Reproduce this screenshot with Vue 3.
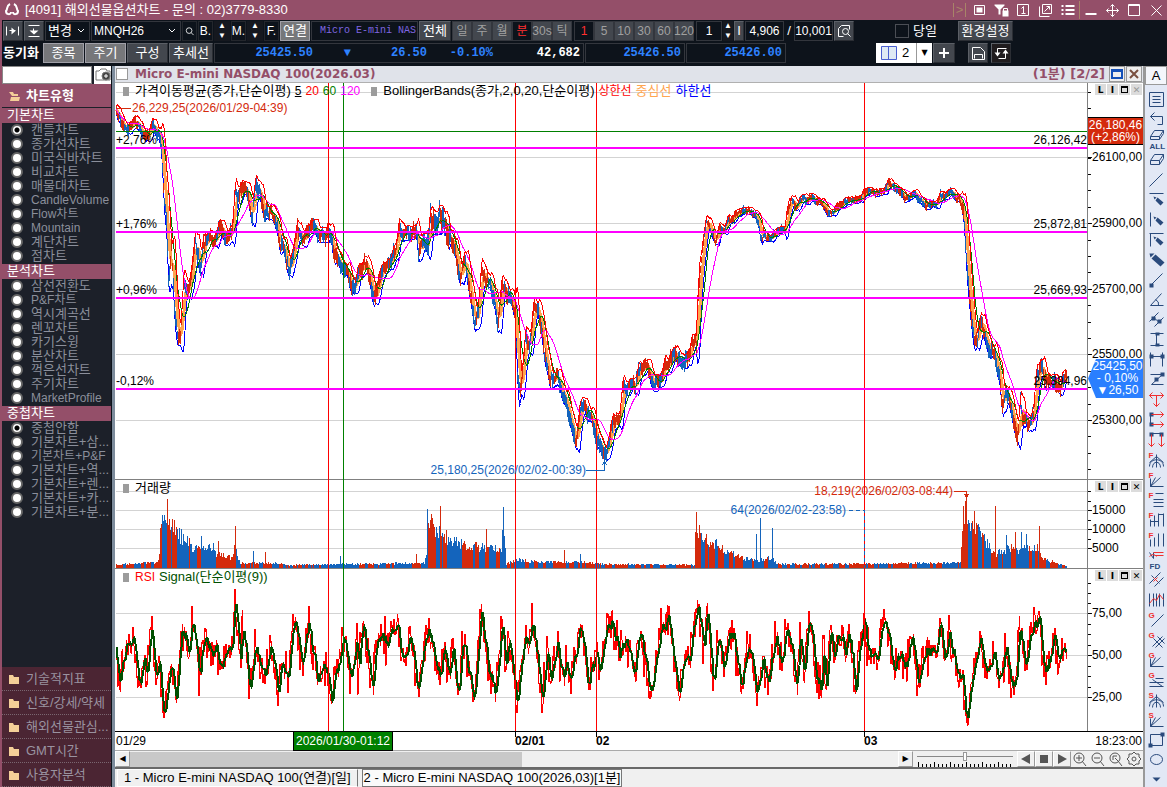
<template>
  <div class="app">
    <header class="titlebar">
      <svg class="brand" viewBox="0 0 16 14"><path d="M6 1C2 3 4 6 2 8c0 4 5 4 5 1M10 1c4 2 2 5 4 7 0 4-5 4-5 1" /></svg>
      <h1>[4091] 해외선물옵션차트 - 문의 : 02)3779-8330</h1>
      <div class="title-more">&gt;</div>
      <button v-for="icon in titleIcons" :key="icon.name" type="button" :class="['title-btn', { first: icon.split }]" :aria-label="icon.name">
        <svg viewBox="-0.5 -0.5 16 16"><path :d="icon.d" /><path v-if="icon.f" class="solid" :d="icon.f" /></svg>
      </button>
    </header>

    <div class="toolbar">
      <div class="bar">
        <button type="button" class="key w20" aria-label="가로맞춤"><svg viewBox="-0.5 -0.5 16 16"><path d="M1 3v9M13 3v9M4 7h6" /><path class="solid" d="M6 4l4 3.500-4 3.500z" /></svg></button>
        <button type="button" class="key w20" aria-label="세로맞춤"><svg viewBox="-0.5 -0.5 16 16"><path d="M2 2h11M2 13h11M7 5v4" /><path class="solid" d="M3 7h9l-4.500 4z" /></svg></button>
        <div class="pick w45">
          <select aria-label="변경"><option>변경</option></select>
          <svg viewBox="0 0 8 6"><path d="M1 1l3 3 3-3" /></svg>
        </div>
        <div class="pick w90">
          <select class="small" aria-label="종목코드"><option>MNQH26</option></select>
          <svg viewBox="0 0 8 6"><path d="M1 1l3 3 3-3" /></svg>
        </div>
        <button type="button" class="flat" aria-label="검색"><svg viewBox="0 0 16 16"><circle cx="7.500" cy="7.500" r="3.500" /><path d="M10 10l3 3" /></svg></button>
        <template v-for="k in ['B', 'M']" :key="k">
          <button type="button" class="flat">{{ k }}.</button>
          <div class="spin"><button type="button" aria-label="위">▲</button><button type="button" aria-label="아래">▼</button></div>
        </template>
        <button type="button" class="flat">F.</button>
        <button type="button" class="key lit w30">연결</button>
        <div class="field name">Micro E-mini NAS</div>
        <button type="button" class="key w32">전체</button>
        <div class="periods">
          <button v-for="p in periods" :key="p" type="button" :class="{ on: p === '분' }">{{ p }}</button>
        </div>
        <div class="periods">
          <button v-for="m in minutes" :key="m" type="button" :class="{ on: m === '1' }">{{ m }}</button>
        </div>
        <input class="field num short" value="1" aria-label="주기">
        <div class="spin slim"><button type="button" aria-label="증가">▲</button><button type="button" aria-label="감소">▼</button></div>
        <button type="button" class="key w10">I</button>
        <input class="field num" value="4,906" aria-label="표시개수">
        <span class="slash">/</span>
        <input class="field num" value="10,001" aria-label="전체개수">
        <button type="button" class="key w20" aria-label="조회"><svg viewBox="-0.5 -0.5 16 16"><path d="M7 13H2V5l3-3h8v4" /><circle cx="9" cy="8" r="3" /><path d="M11 10l3 3" /></svg></button>
        <label class="today"><input type="checkbox">당일</label>
        <button type="button" class="key w55">환경설정</button>
      </div>
      <div class="bar">
        <strong class="sync">동기화</strong>
        <button type="button" class="key lit w40">종목</button>
        <button type="button" class="key lit w40">주기</button>
        <button type="button" class="key w40">구성</button>
        <button type="button" class="key w44">추세선</button>
        <div class="quote">
          <span class="q1">25425.50</span><span class="q2">▼</span><span class="q3">26.50</span><span class="q4">-0.10%</span><span class="q5">42,682</span>
        </div>
        <div class="quote ask">25426.50</div>
        <div class="quote ask">25426.00</div>
        <div class="layout-pick">
          <svg viewBox="-0.5 -0.5 16 14"><path d="M0 0h15v13H0zM7 0v13" /></svg>
          <select aria-label="화면분할"><option>2</option></select>
          <i>▼</i>
        </div>
        <button type="button" class="key w22" aria-label="추가"><svg class="bold" viewBox="0 0 16 16"><path d="M8 3v10M3 8h10" /></svg></button>
        <button type="button" class="key w20 save" aria-label="저장"><svg viewBox="-0.5 -0.5 16 16"><path d="M2 2h8l4 4v8H2zM4 13V9h8v4" /></svg></button>
        <button type="button" class="key w20 swap" aria-label="새로고침"><svg viewBox="-0.5 -0.5 16 16"><path d="M4 8V3h9M12 7v6H5" /><path class="solid" d="M1 7h6l-3 4zM9 8h6l-3-4z" /></svg></button>
      </div>
    </div>

    <div class="body">
      <aside class="side">
        <div class="finder">
          <input type="text" aria-label="차트검색">
          <button type="button" aria-label="캡처"><svg viewBox="0 0 16 14"><path d="M1 3h3l2-2h5l1 2h3v9H1z" /><circle class="dark" cx="11" cy="8" r="4" /><path class="plus" d="M11 6v4M9 8h4" /></svg></button>
        </div>
        <h2><svg class="folder" viewBox="0 0 12 12"><path d="M1 2h4l1 2h4v2H4zM3 7h9l-1 4H2z" /></svg>차트유형</h2>
        <fieldset v-for="g in groups" :key="g.title">
          <legend>{{ g.title }}</legend>
          <label v-for="(item, i) in g.items" :key="item">
            <input type="radio" :name="g.title" :checked="g.on === i">
            <span :class="{ small: /[A-Z]/.test(item) }">{{ item }}</span>
          </label>
        </fieldset>
        <nav>
          <a v-for="m in menus" :key="m" href="#"><svg class="folder" viewBox="0 0 12 12"><path d="M1 2h4l1 2h5v7H1z" /></svg><span>{{ m }}</span></a>
        </nav>
      </aside>

      <main class="work">
        <div class="caption">
          <input type="checkbox" aria-label="선택">
          <strong>Micro E-mini NASDAQ 100(2026.03)</strong>
          <b>(1분) [2/2]</b>
          <button type="button" aria-label="최대화"><svg viewBox="0 0 14 14"><path class="win" d="M2 3h10v8H2zM2 4h10" /></svg></button>
          <button type="button" aria-label="닫기"><svg viewBox="0 0 14 14"><path class="x" d="M3 3l8 8M11 3l-8 8" /></svg></button>
        </div>

        <section v-for="p in panes" :key="p.id" :class="['pane', p.id]">
          <div class="plot">
            <svg :viewBox="`115 ${p.top} 972 ${p.height}`" preserveAspectRatio="none">
              <path class="grid" :d="p.grid.map(y => `M116 ${y + 0.5}H1087`).join('')" />
              <path v-for="l in p.lines" :key="l.cls" :class="l.cls" :d="l.d" />
              <path class="day" :d="days.map(x => `M${x + 0.5} ${p.top}V${p.top + p.height}`).join('')" />
              <path class="cross" :d="`M343.5 ${p.top}V${p.top + p.height}` + (p.id === 'price' ? 'M116 131.5H1087' : '')" />
              <path v-if="p.id === 'price'" class="level" d="M116 148H1087M116 232H1087M116 298H1087M116 389H1087" />
              <path v-if="p.id === 'price'" class="note-up" d="M117 108.500H131" />
              <path v-if="p.id === 'price'" class="note-down" d="M586 470.500H604.500V462M602 465l2.500-3 2.500 3" />
              <path v-if="p.id === 'volume'" class="note-up" d="M954 491.500H966.500V496M964 494h5l-2.500 3z" />
              <path v-if="p.id === 'volume'" class="note-down dash" d="M849 510.500H864.500V568" />
            </svg>
            <div class="legend">
              <template v-for="(row, n) in p.legend" :key="n">
                <i></i><span v-for="t in row" :key="t.text" :class="t.color">{{ t.text }}</span>
              </template>
            </div>
            <span v-for="t in p.notes" :key="t.text" :class="['note', t.cls]" :style="place(p, t)">{{ t.text }}</span>
          </div>
          <div class="axis">
            <svg :viewBox="`0 ${p.top} 56 ${p.height}`" preserveAspectRatio="none">
              <path :d="p.ticks.map(y => `M0 ${y + 0.5}h3`).join('') + p.labels.map(l => `M0 ${l.y + 0.5}h4`).join('')" />
            </svg>
            <div class="pane-tools">
              <button type="button">L</button><button type="button">I</button><button type="button" aria-label="최대"><i></i></button><button type="button" :class="{ off: p.id === 'price' }">✕</button>
            </div>
            <span v-for="l in p.labels" :key="l.text" class="scale" :style="{ top: (l.y - p.top) / p.height * 100 + '%' }">{{ l.text }}</span>
            <div v-if="p.id === 'price'" class="tag high">26,180,46<br>(+2,86%)</div>
            <div v-if="p.id === 'price'" class="tag now">25425,50<br>- 0,10%<br>▼26,50</div>
          </div>
        </section>

        <div class="timeline">
          <div class="dates">
            <span v-for="d in dates" :key="d.text" :class="d.cls" :style="{ left: (d.x - 115) / 972 * 100 + '%' }">{{ d.text }}</span>
          </div>
          <time>18:23:00</time>
        </div>

        <div class="scroller">
          <button type="button" aria-label="왼쪽">◀</button>
          <div class="track"><div class="thumb"></div></div>
          <button type="button" aria-label="오른쪽">▶</button>
          <div class="speed">
            <input type="range" min="0" max="100" value="50" aria-label="속도">
            <svg viewBox="0 0 96 5" preserveAspectRatio="none"><path :d="speedTicks" /></svg>
          </div>
          <button v-for="b in media" :key="b.name" type="button" class="media" :aria-label="b.name">
            <svg viewBox="0 0 12 12"><path class="solid" :d="b.d" /></svg>
          </button>
          <button v-for="z in zooms" :key="z.name" type="button" class="zoom" :aria-label="z.name">
            <svg viewBox="0 0 16 16"><path :d="z.d" /></svg>
          </button>
        </div>

        <div class="tabs">
          <button type="button">1 - Micro E-mini NASDAQ 100(연결)[일]</button>
          <button type="button" class="active">2 - Micro E-mini NASDAQ 100(2026,03)[1분]</button>
        </div>
      </main>

      <div class="tools">
        <button type="button" class="letter">A</button>
        <button v-for="(t, i) in tools" :key="i" type="button" :aria-label="'도구 ' + (i + 1)">
          <svg viewBox="-0.5 -0.5 20 20">
            <path v-if="t.b" :d="t.b" />
            <path v-if="t.f" class="solid" :d="t.f" />
            <path v-if="t.r" class="red" :d="t.r" />
            <text v-if="t.t" x="2" y="8" class="red-text">{{ t.t }}</text>
            <text v-if="t.w" x="3" y="19">{{ t.w }}</text>
          </svg>
        </button>
      </div>
    </div>
  </div>
</template>

<script setup>
const titleIcons = [
  { name: '도킹', d: 'M3 3h10v9H3z', f: 'M5 5h6v5H5z' },
  { name: '잠금', d: 'M10 9V6h4v3', f: 'M1 2h10v1L7 7v5H5V7L1 3zM9 8h6v6H9z' },
  { name: '화면번호', d: 'M2 2h11v11H2zM6 6l2-2v7M6 11h4' },
  { name: '새창', d: 'M5 2h9v9H5zM2 4v10h10M7 9l5-5M9 4h3v3' },
  { name: '목록', d: 'M6 3h9M6 4h9M6 7h9M6 8h9M6 11h9M6 12h9M2 3h2M2 4h2M2 7h2M2 8h2M2 11h2M2 12h2' },
  { name: '최소화', split: true, d: 'M2 11h11M2 12h11' },
  { name: '이동', d: 'M8 2v12M2 8h12M6 4l2-2 2 2M6 12l2 2 2-2M4 6L2 8l2 2M12 6l2 2-2 2' },
  { name: '최대화', d: 'M2 2h11v11H2zM2 3h11' },
  { name: '닫기', d: 'M3 3l10 10M13 3L3 13' }
]

const periods = ['일', '주', '월', '분', '30s', '틱']
const minutes = ['1', '5', '10', '30', '60', '120']

const groups = [
  { title: '기본차트', on: 0, items: ['캔들차트', '종가선차트', '미국식바차트', '비교차트', '매물대차트', 'CandleVolume', 'Flow차트', 'Mountain', '계단차트', '점차트'] },
  { title: '분석차트', on: -1, items: ['삼선전환도', 'P&F차트', '역시계곡선', '렌꼬차트', '카기스윙', '분산차트', '꺽은선차트', '주기차트', 'MarketProfile'] },
  { title: '중첩차트', on: 0, items: ['중첩안함', '기본차트+삼...', '기본차트+P&F', '기본차트+역...', '기본차트+렌...', '기본차트+카...', '기본차트+분...'] }
]
const menus = ['기술적지표', '신호/강세/약세', '해외선물관심...', 'GMT시간', '사용자분석']

const days = [328, 515, 596, 864]
const dates = [
  { x: 116, text: '01/29', cls: 'plain' },
  { x: 293, text: '2026/01/30-01:12', cls: 'cursor' },
  { x: 515, text: '02/01', cls: 'mark' },
  { x: 596, text: '02', cls: 'mark' },
  { x: 864, text: '03', cls: 'mark' }
]

// 고정 시드 난수
let seed = 7
const rand = () => {
  seed = (seed * 16807) % 2147483647
  return seed / 2147483647
}

const FROM = 116
const TO = 1066

// 기준점 사이를 1px 간격으로 보간
const spread = (pts) => {
  const out = []
  let k = 0
  for (let x = FROM; x <= TO; x++) {
    while (k < pts.length - 2 && x > pts[k + 1][0]) k++
    const [x0, y0] = pts[k]
    const [x1, y1] = pts[k + 1]
    const r = Math.min(1, Math.max(0, (x - x0) / (x1 - x0)))
    out.push(y0 + (y1 - y0) * r)
  }
  return out
}

const mean = (arr, i, n) => {
  const part = arr.slice(Math.max(0, i - n + 1), i + 1)
  return part.reduce((a, b) => a + b, 0) / part.length
}
const dev = (arr, i, n) => {
  const m = mean(arr, i, n)
  const part = arr.slice(Math.max(0, i - n + 1), i + 1)
  return Math.sqrt(part.reduce((a, b) => a + (b - m) ** 2, 0) / part.length)
}
const toPath = (arr) => 'M' + arr.map((y, i) => `${FROM + i + 0.5} ${y.toFixed(1)}`).join('L')

const pricePts = [
  [116, 112], [118, 117], [122, 125], [128, 128], [135, 120], [139, 127], [143, 133], [148, 135], [152, 125], [158, 135], [161, 147], [163, 190], [166, 223],
  [168, 280], [171, 247], [174, 310], [177, 337], [180, 337], [183, 280], [187, 290], [191, 273], [195, 240], [200, 270], [203, 247], [208, 240], [218, 230],
  [225, 240], [232, 230], [235, 190], [238, 197], [242, 183], [247, 197], [252, 217], [255, 187], [260, 193], [265, 210], [272, 213], [277, 227], [280, 250],
  [283, 240], [289, 273], [293, 247], [297, 230], [303, 240], [312, 227], [328, 235], [335, 260], [343, 267], [354, 290], [359, 273], [364, 263], [370, 287],
  [374, 297], [378, 277], [388, 260], [397, 240], [399, 225], [405, 233], [416, 227], [418, 253], [423, 240], [427, 243], [430, 220], [434, 232], [440, 215],
  [443, 227], [448, 237], [455, 247], [460, 283], [464, 260], [469, 287], [474, 322], [478, 307], [481, 267], [487, 277], [492, 293], [497, 322], [502, 287],
  [507, 300], [515, 310], [517, 375], [520, 385], [525, 337], [529, 347], [533, 313], [538, 315], [542, 343], [549, 378], [558, 380], [567, 407], [576, 438],
  [579, 413], [583, 400], [590, 420], [596, 433], [601, 450], [606, 453], [610, 433], [613, 420], [619, 417], [622, 393], [629, 385], [635, 393], [638, 372],
  [647, 370], [654, 383], [661, 373], [667, 363], [675, 350], [679, 360], [685, 361], [692, 340], [696, 345], [697, 300], [700, 267], [702, 247], [706, 222],
  [710, 229], [715, 243], [719, 229], [724, 231], [727, 217], [733, 217], [740, 213], [751, 210], [758, 223], [760, 235], [769, 240], [776, 229], [785, 230],
  [786, 213], [792, 200], [796, 208], [802, 197], [806, 203], [811, 195], [819, 203], [827, 215], [836, 208], [844, 200], [851, 197], [856, 200], [865, 192],
  [874, 190], [883, 194], [888, 184], [894, 188], [899, 195], [906, 198], [913, 195], [920, 202], [927, 206], [935, 207], [940, 195], [951, 193], [958, 198],
  [963, 208], [965, 240], [967, 273], [970, 313], [974, 345], [977, 343], [981, 320], [985, 333], [990, 353], [995, 363], [999, 383], [1002, 403], [1005, 385],
  [1010, 408], [1013, 420], [1017, 438], [1020, 405], [1024, 423], [1027, 430], [1033, 413], [1035, 383], [1041, 367], [1044, 380], [1049, 383], [1053, 380],
  [1056, 385], [1061, 380], [1066, 378]
]

const rsiPts = [
  [116, 657], [120, 697], [122, 660], [130, 647], [133, 633], [139, 693], [144, 650], [146, 677], [151, 630], [155, 677], [159, 667], [163, 710], [170, 670],
  [176, 700], [181, 630], [188, 653], [194, 617], [199, 680], [203, 637], [213, 660], [215, 637], [220, 673], [227, 647], [231, 667], [235, 598], [241, 660],
  [242, 623], [248, 680], [251, 690], [255, 633], [262, 677], [270, 653], [278, 693], [282, 663], [288, 683], [295, 610], [302, 663], [309, 623], [317, 680],
  [323, 660], [332, 697], [339, 660], [343, 640], [350, 680], [357, 640], [358, 670], [363, 630], [373, 683], [377, 647], [383, 630], [388, 647], [394, 620],
  [399, 628], [403, 670], [407, 643], [412, 643], [417, 690], [422, 653], [428, 630], [440, 680], [443, 640], [449, 680], [453, 650], [458, 690], [463, 637],
  [473, 700], [481, 617], [488, 670], [496, 693], [502, 623], [505, 670], [508, 643], [513, 667], [516, 710], [524, 630], [528, 647], [532, 620], [542, 700],
  [547, 657], [551, 677], [557, 647], [563, 680], [567, 660], [570, 687], [581, 623], [588, 680], [594, 655], [600, 675], [606, 630], [612, 620], [620, 650],
  [626, 630], [633, 680], [640, 630], [646, 665], [652, 692], [659, 640], [667, 615], [673, 655], [679, 695], [685, 650], [690, 655], [697, 604], [703, 645],
  [707, 615], [713, 682], [718, 640], [723, 672], [729, 630], [735, 650], [741, 690], [747, 645], [752, 660], [757, 695], [762, 665], [768, 680], [775, 640],
  [782, 660], [787, 630], [797, 683], [800, 630], [804, 670], [809, 613], [815, 670], [821, 693], [823, 647], [826, 687], [831, 630], [835, 653], [839, 627],
  [845, 657], [849, 630], [855, 687], [863, 623], [870, 657], [875, 663], [886, 620], [895, 673], [900, 647], [905, 673], [912, 640], [918, 683], [927, 650],
  [933, 660], [940, 623], [945, 657], [948, 630], [952, 660], [962, 673], [965, 712], [969, 703], [975, 667], [980, 640], [987, 680], [992, 653], [1001, 687],
  [1005, 650], [1011, 683], [1017, 677], [1019, 627], [1025, 667], [1034, 623], [1039, 623], [1045, 670], [1052, 660], [1054, 637], [1058, 667], [1062, 637],
  [1066, 660]
]

const volumePts = [
  [116, 3], [156, 6], [159, 12], [160, 50], [166, 50], [168, 54], [175, 36], [185, 28], [195, 18], [205, 20], [215, 14], [232, 10], [234, 22], [236, 16], [240, 5],
  [280, 5], [290, 3], [424, 5], [426, 12], [427, 48], [440, 36], [450, 28], [470, 22], [500, 18], [504, 30], [506, 4], [515, 8], [540, 6], [575, 6], [600, 4],
  [694, 3], [695, 46], [700, 36], [710, 26], [722, 20], [745, 9], [758, 8], [772, 10], [776, 4], [830, 4], [960, 5], [963, 58], [970, 45], [980, 34], [988, 22],
  [996, 14], [1010, 20], [1020, 18], [1038, 20], [1041, 10], [1055, 5], [1066, 2]
]
const spikes = { 167: 69, 201: 32, 209: 24, 213: 25, 218: 27, 235: 42, 253: 17, 265: 16, 340: 12, 416: 14, 427: 59, 440: 62, 486: 39, 502: 38, 503: 61, 564: 18, 580: 14, 696: 56, 756: 34, 760: 50, 772: 40, 963: 62, 966: 70, 974: 57, 978: 44, 995: 62, 1006: 33, 1015: 36, 1021: 36, 1026: 34, 1039: 42 }

const swing = (x) => {
  if (x < 160) return 4
  if (x > 426 && x < 450) return 10
  if (x < 700) return 6
  if (x < 962) return 3
  return 6
}

let walk = 0
const close = spread(pricePts).map((y, i) => {
  walk = walk * 0.6 + (rand() - 0.5) * swing(FROM + i) * 1.4
  return y + walk
})
const candles = { up: '', down: '' }
let run = 0
let side = 'down'
close.forEach((y, i) => {
  if (run-- <= 0) {
    const slope = (close[i + 3] || y) - y
    side = rand() < (slope > 0 ? 0.4 : 0.65) ? 'up' : 'down'
    run = Math.floor(rand() * 3)
  }
  const x = FROM + i
  const a = swing(x)
  candles[side] += `M${x + 0.5} ${Math.round(y - a * (0.5 + rand()))}V${Math.round(y + a * (0.5 + rand()))}`
})

const ma = (n) => toPath(close.map((_, i) => mean(close, i, n)))
const band = (sign) => toPath(close.map((_, i) => mean(close, i, 5) + sign * (dev(close, i, 5) * 1.5 + swing(FROM + i) * 0.7)))

const bars = { up: '', down: '' }
spread(volumePts).forEach((h, i) => {
  const x = FROM + i
  if (run-- <= 0) {
    side = rand() < 0.5 ? 'up' : 'down'
    run = Math.floor(rand() * 4)
  }
  const v = spikes[x] || Math.max(1, h * (0.75 + rand() * 0.5))
  bars[side] += `M${x + 0.5} 568V${Math.round(568 - v)}`
})

const rsi = spread(rsiPts).map((y) => y + (rand() - 0.5) * 28)
const rsiLine = 'M' + rsi.map((y, i) => {
  const x = FROM + i
  return `${x} ${Math.round(y + (rand() - 0.5) * 24)}L${x + 0.5} ${Math.round(y)}`
}).join('L')
const signal = toPath(rsi.map((_, i) => mean(rsi, i, 3)))

const every = (from, to, step) => {
  const out = []
  for (let y = from; y < to; y += step) out.push(Math.round(y))
  return out
}

const panes = [
  {
    id: 'price', top: 83, height: 397,
    grid: [92, 157, 223, 289, 354, 420],
    ticks: every(92, 470, 16.4),
    labels: [{ y: 157, text: '26100,00' }, { y: 223, text: '25900,00' }, { y: 289, text: '25700,00' }, { y: 354, text: '25500,00' }, { y: 420, text: '25300,00' }],
    lines: [
      { cls: 'lower', d: band(1) }, { cls: 'middle', d: ma(5) }, { cls: 'down', d: candles.down }, { cls: 'up', d: candles.up },
      { cls: 'ma60', d: ma(11) }, { cls: 'ma120', d: ma(22) }, { cls: 'upper', d: band(-1) }
    ],
    legend: [
      [{ text: '가격이동평균(종가,단순이평)', color: 'black' }, { text: '5', color: 'black under' }, { text: '20', color: 'red' }, { text: '60', color: 'green' }, { text: '120', color: 'pink' }],
      [{ text: 'BollingerBands(종가,2,0,20,단순이평)', color: 'black' }, { text: '상한선', color: 'red' }, { text: '중심선', color: 'orange' }, { text: '하한선', color: 'blue' }]
    ],
    notes: [
      { x: 132, y: 108, text: '26,229,25(2026/01/29-04:39)', cls: 'rise' },
      { x: 586, y: 470, text: '25,180,25(2026/02/02-00:39)', cls: 'fall end' },
      { x: 116, y: 140, text: '+2,76%' }, { x: 116, y: 224, text: '+1,76%' }, { x: 116, y: 290, text: '+0,96%' }, { x: 116, y: 381, text: '-0,12%' },
      { x: 1087, y: 140, text: '26,126,42', cls: 'end' }, { x: 1087, y: 224, text: '25,872,81', cls: 'end' },
      { x: 1087, y: 290, text: '25,669,93', cls: 'end' }, { x: 1087, y: 381, text: '25,394,96', cls: 'end' }
    ]
  },
  {
    id: 'volume', top: 480, height: 89,
    grid: [491, 510, 529, 548],
    ticks: [491, 501, 520, 539],
    labels: [{ y: 510, text: '15000' }, { y: 529, text: '10000' }, { y: 548, text: '5000' }],
    lines: [{ cls: 'down', d: bars.down }, { cls: 'up', d: bars.up }],
    legend: [[{ text: '거래량', color: 'black' }]],
    notes: [
      { x: 953, y: 491, text: '18,219(2026/02/03-08:44)', cls: 'rise end' },
      { x: 846, y: 510, text: '64(2026/02/02-23:58)', cls: 'fall end' }
    ]
  },
  {
    id: 'rsi', top: 569, height: 162,
    grid: [613, 655, 697],
    ticks: [583, 593, 603, 624, 634, 645, 666, 676, 687],
    labels: [{ y: 613, text: '75,00' }, { y: 655, text: '50,00' }, { y: 697, text: '25,00' }],
    lines: [{ cls: 'rsi-line', d: rsiLine }, { cls: 'signal', d: signal }],
    legend: [[{ text: 'RSI', color: 'red' }, { text: 'Signal(단순이평(9))', color: 'deep' }]],
    notes: []
  }
]

const place = (p, t) => ({ left: (t.x - 115) / 972 * 100 + '%', top: (t.y - p.top) / p.height * 100 + '%' })

const speedTicks = every(1, 96, 4).map((x, i) => `M${x + 0.5} ${i % 4 ? 2 : 0}V5`).join('')

const media = [
  { name: '뒤로', d: 'M10 1v10L1 6z' },
  { name: '정지', d: 'M2 2h8v8H2z' },
  { name: '앞으로', d: 'M2 1v10l9-5z' }
]

const lens = 'M2 7a5 5 0 1 0 10 0a5 5 0 1 0-10 0M10 10l4 5'
const zooms = [
  { name: '확대', d: lens + 'M4 7h6M7 4v6' },
  { name: '축소', d: lens + 'M4 7h6' },
  { name: '원래대로', d: lens + 'M5 9V5h4M7 7l3 3' },
  { name: '설정', d: 'M8 1l2 2 3 0 0 3 2 2-2 2 0 3-3 0-2 2-2-2-3 0 0-3-2-2 2-2 0-3 3 0zM6 8a2 2 0 1 0 4 0a2 2 0 1 0-4 0' }
]

const pen = 'M7 7l3 1-2 2zM11 8l6 5-3 3-5-5z'
const fan = 'M4 17h13M4 17L14 8M4 17L9 8M4 17V9'
const arcs = 'M10 5v13M3 17c0-9 14-9 14 0M6 18c0-7 8-7 8 0M10 7l-7 6M10 7l7 6'
const tools = [
  { b: 'M3 3h14v14H3zM6 7h8M6 10h8M6 13h8' },
  { b: 'M8 3L4 7l4 4M4 7h12v8h-5M5 6v2' },
  { b: 'M4 7l4-6h9l-4 6zM4 7v3h9V7M13 10l4-6V1', w: 'ALL' },
  { b: 'M4 11l4-6h9l-4 6zM4 11v4h9v-4M13 15l4-6V5' },
  { b: 'M3 17L16 4' },
  { b: 'M3 4h14', f: pen },
  { b: 'M4 3v14', f: pen },
  { b: 'M3 4h14M4 4v13', f: pen },
  { f: 'M3 4l5 0-4 4zM9 5l9 8-4 4-9-8z' },
  { b: 'M4 16L16 4', f: 'M3 14h4v4H3z' },
  { b: 'M17 16H4L15 4M9 10q4 2 3 6' },
  { b: 'M3 12l9-9M8 17l9-9M7 8l6 5', f: 'M5 7h4v4H5zM11 10h4v4h-4z' },
  { b: 'M4 4h13M4 16h13M10 4v12', f: 'M9 3h4v3H9zM9 14h4v3H9z' },
  { b: 'M4 3v14M16 3v14M4 7h12', f: 'M3 5h4v4H3zM14 5h4v4h-4z' },
  { b: 'M4 5h12L5 15h12', f: 'M8 8h4v4H8zM14 3h4v4h-4z' },
  { r: 'M3 6h14M10 6v11M6 3L3 6l3 3M14 3l3 3-3 3M7 14l3 3 3-3' },
  { b: 'M4 4v12', r: 'M5 5h12M5 15h12M14 2l3 3-3 3M14 12l3 3-3 3', f: 'M3 3h4v4H3zM3 13h4v4H3z' },
  { b: 'M4 4h12', r: 'M5 5v12M15 5v12M2 14l3 3 3-3M12 14l3 3 3-3', f: 'M3 3h4v4H3zM13 3h4v4h-4z' },
  { b: arcs, t: 'F' },
  { b: fan, t: 'F' },
  { b: 'M9 4h8M7 10h10M7 13h10M7 17h10', t: 'F' },
  { b: 'M4 10v7M8 6v11M12 4v13M17 4v13M4 12h8M12 5h5', t: 'F' },
  { b: 'M4 10v7M8 8v9M12 4v13M17 4v13', t: 'F' },
  { b: 'M3 3l4 6V3', r: 'M7 3h10M8 6h9M3 7q4-4 7 0', w: 'FD' },
  { b: 'M3 14L14 3M8 17l9-9M5 6l8 8', r: 'M7 8l4 4M11 8l-4 4' },
  { b: 'M3 4v13M7 4v13M10 4v13M13 4v13M17 4v13', r: 'M3 14l4-5 3 2 3-6 4 5' },
  { b: 'M5 17L17 5', t: 'G' },
  { b: 'M6 17L16 7M9 18l9-9M7 9l9 9M11 7l7 7', t: 'G' },
  { b: fan, t: 'G' },
  { b: 'M3 13h14M3 17h14M9 9h8M6 10l10 7', t: 'G' },
  { b: arcs, t: 'S' },
  { b: fan, t: 'S' },
  { b: 'M4 5h12v11H4z', f: 'M14 3h4v4h-4zM2 14h4v4H2z' },
  { b: 'M4 10a6 5 0 1 0 12 0a6 5 0 1 0-12 0' },
  { f: 'M6 8h8l-4 4z' }
]
</script>

<style>
html,
body,
#app {
  height: 100%;
  margin: 0;
}
</style>

<style scoped>
* {
  box-sizing: border-box;
}

.app {
  display: flex;
  flex-direction: column;
  height: 100vh;
  overflow: hidden;
  background: #0d131b;
  font-family: "Liberation Sans", "Noto Sans CJK KR", sans-serif;
  font-size: 13px;
  line-height: 14px;
  color: #000;
}

button,
input,
select {
  font: inherit;
  margin: 0;
  padding: 0;
  border: 0;
  border-radius: 0;
}

button {
  display: flex;
  align-items: center;
  justify-content: center;
  flex: none;
}

svg {
  display: block;
  fill: none;
  stroke: currentColor;
}

.solid {
  fill: currentColor;
  stroke: none;
}

.small {
  font-size: 12px;
}

/* 제목줄 */
.titlebar {
  display: flex;
  align-items: center;
  flex: none;
  height: 20px;
  padding-left: 4px;
  background: #944f69;
  color: #fff;
}

.brand {
  width: 16px;
  height: 14px;
  stroke-width: 2;
}

.titlebar h1 {
  flex: 1;
  margin: 0;
  padding-left: 5px;
  font-size: 13px;
  font-weight: normal;
  white-space: nowrap;
}

.title-more {
  width: 13px;
  margin-right: 2px;
  border: solid #a88468;
  border-width: 0 1px;
  text-align: center;
  color: #a88468;
}

.title-btn {
  width: 22px;
  height: 18px;
  background: none;
  color: #fff;
}

.title-btn.first {
  margin-left: 1px;
  border-left: 1px solid #a88468;
}

.title-btn svg {
  width: 16px;
  height: 16px;
}

/* 도구막대 */
.toolbar {
  flex: none;
  height: 46px;
  padding: 1px 0 0 1px;
  border-left: 2px solid #944f69;
  color: #fff;
  overflow: hidden;
}

.bar {
  display: flex;
  align-items: center;
  gap: 1px;
  height: 20px;
  margin-bottom: 2px;
}

.bar > * {
  flex: none;
}

.key {
  height: 20px;
  border: 1px solid #5b5f66;
  border-right-color: #2b2e34;
  border-bottom-color: #2b2e34;
  background: #43474e;
  color: #fff;
  white-space: nowrap;
}

.key.lit {
  background: #76777a;
  border: 1px solid #a0a0a8;
}

.key svg,
.flat svg {
  width: 16px;
  height: 16px;
}

.bold {
  stroke-width: 2;
}

.w10 { width: 10px; }
.w20 { width: 20px; }
.w22 { width: 22px; }
.w30 { width: 30px; }
.w32 { width: 32px; }
.w40 { width: 41px; }
.w44 { width: 44px; }
.w45 { width: 45px; }
.w55 { width: 55px; }
.w90 { width: 90px; }

.pick {
  position: relative;
  height: 20px;
  border: 1px solid #33363d;
}

.pick select {
  width: 100%;
  height: 18px;
  padding-left: 2px;
  appearance: none;
  background: transparent;
  color: #fff;
}

.pick svg {
  position: absolute;
  right: 4px;
  top: 6px;
  width: 8px;
  height: 6px;
}

.flat {
  width: 15px;
  height: 20px;
  border: 1px solid #24272d;
  background: transparent;
  color: #fff;
  font-size: 12px;
}

.spin {
  display: flex;
  flex-direction: column;
  width: 16px;
  height: 20px;
}

.spin button {
  height: 10px;
  background: #15181f;
  color: #fff;
  font-size: 8px;
  line-height: 8px;
}

.spin.slim {
  width: 10px;
}

.field {
  height: 20px;
  border: 1px solid #33363d;
  background: #0d131b;
  color: #fff;
}

.field.name {
  width: 107px;
  padding: 2px 0 0 8px;
  overflow: hidden;
  font-family: "Liberation Mono", monospace;
  font-size: 10px;
  white-space: nowrap;
  color: #7f66e0;
}

.field.num {
  width: 39px;
  font-size: 12px;
  text-align: center;
}

.field.num.short {
  width: 26px;
}

.periods {
  display: flex;
  margin-right: 1px;
}

.periods button {
  width: 20px;
  height: 20px;
  border: 1px solid #33363d;
  background: #43474e;
  color: #a0a0a0;
  font-size: 12px;
}

.periods .on {
  background: #0d131b;
  color: #ff3030;
}

.slash {
  width: 8px;
  text-align: center;
}

.today {
  display: flex;
  align-items: center;
  gap: 4px;
  width: 102px;
  padding-left: 40px;
}

.today input {
  appearance: none;
  width: 14px;
  height: 14px;
  border: 1px solid #4b4e55;
}

.sync {
  width: 39px;
  white-space: nowrap;
}

.quote {
  display: flex;
  width: 370px;
  height: 20px;
  padding: 2px 3px;
  border: 1px solid #33363d;
  font: bold 12px/14px "Liberation Mono", monospace;
  color: #2e82ff;
}

.quote span {
  text-align: right;
}

.q1 { width: 95px; }
.q2 { width: 38px; }
.q3 { width: 76px; }
.q4 { width: 66px; }
.q5 { width: 87px; color: #fff; }

.quote.ask {
  justify-content: flex-end;
  width: 100px;
}

.layout-pick {
  display: flex;
  align-items: center;
  position: relative;
  width: 56px;
  height: 20px;
  margin-left: 89px;
  padding-left: 5px;
  background: #fff;
  color: #000;
}

.layout-pick svg {
  width: 16px;
  height: 14px;
  background: #dfeaf4;
  stroke: #4a5fd0;
}

.layout-pick select {
  width: 35px;
  padding-left: 5px;
  appearance: none;
  background: transparent;
}

.layout-pick i {
  position: absolute;
  right: 0;
  width: 16px;
  border-left: 1px solid #999;
  font: 8px/20px "DejaVu Sans", sans-serif;
  text-align: center;
  pointer-events: none;
}

.save {
  margin-left: 12px;
}

.swap {
  margin-left: 2px;
  background: #201c1e;
}

/* 본문 */
.body {
  display: flex;
  flex: 1;
  min-height: 0;
}

.side {
  display: flex;
  flex-direction: column;
  flex: none;
  width: 111px;
  border-left: 2px solid #944f69;
  background: #1c2029;
  overflow: hidden;
}

.finder {
  display: flex;
  gap: 2px;
  flex: none;
  height: 18px;
}

.finder input {
  flex: 1;
  min-width: 0;
  border: 1px solid #888;
  background: #fff;
}

.finder button {
  width: 17px;
  background: #fff;
  color: #777;
}

.finder svg {
  width: 16px;
  height: 14px;
}

.finder .dark {
  fill: #444;
}

.finder .plus {
  stroke: #fff;
}

.side h2 {
  display: flex;
  align-items: center;
  gap: 6px;
  flex: none;
  height: 23px;
  margin: 0;
  padding-left: 6px;
  background: #944f69;
  color: #fff;
  font-size: 13px;
}

.folder {
  flex: none;
  width: 12px;
  height: 12px;
  fill: #f4cf98;
  stroke: none;
}

fieldset {
  flex: none;
  min-width: 0;
  margin: 0;
  padding: 0;
  border: 0;
}

legend {
  width: 100%;
  height: 16px;
  padding: 0 5px;
  border-top: 1px solid #1c2029;
  background: #944f69;
  color: #fff;
  line-height: 14px;
}

fieldset label {
  display: flex;
  align-items: center;
  gap: 8px;
  height: 14px;
  padding-left: 9px;
  color: #8b8f9b;
  white-space: nowrap;
}

fieldset input {
  appearance: none;
  flex: none;
  width: 12px;
  height: 12px;
  border: 2px solid #666;
  border-radius: 50%;
  background: #fff;
}

fieldset input:checked {
  background: radial-gradient(circle, #000 2px, #fff 3px);
}

nav {
  margin-top: auto;
}

nav a {
  display: flex;
  align-items: center;
  gap: 6px;
  height: 24px;
  padding-left: 6px;
  border-bottom: 1px dotted #7a6670;
  background: #4b2533;
  color: #9a93a0;
  text-decoration: none;
  white-space: nowrap;
}

.work {
  display: flex;
  flex-direction: column;
  flex: 1;
  min-width: 0;
  border-left: 3px solid #7d8c9c;
  margin-left: 1px;
  background: #f0f0f0;
}

.caption {
  display: flex;
  align-items: center;
  flex: none;
  height: 17px;
  background: #e0e3ea;
  border-bottom: 1px solid #b0b0b0;
  font-family: "DejaVu Sans", "Noto Sans CJK KR", sans-serif;
  font-size: 12px;
  color: #944f69;
}

.caption input {
  appearance: none;
  width: 12px;
  height: 12px;
  margin: 0 7px 0 1px;
  border: 1px solid #999;
  background: #fff;
}

.caption strong {
  flex: 1;
}

.caption b {
  margin-right: 4px;
  font-size: 13px;
}

.caption button {
  width: 16px;
  height: 16px;
  margin-right: 1px;
  border: 1px solid #999;
  background: #eee;
}

.caption button svg {
  width: 14px;
  height: 14px;
  stroke-width: 2;
}

.win {
  stroke: #1450b8;
}

.x {
  stroke: #7a5040;
}

.pane {
  display: flex;
  min-height: 0;
  background: #fff;
}

.price { flex: 397 1 0; }
.volume { flex: 89 1 0; }
.rsi { flex: 162 1 0; }

.plot {
  position: relative;
  flex: 1;
  min-width: 0;
}

.price,
.volume {
  box-shadow: inset 0 -1px #808080;
}

.plot svg,
.axis svg {
  position: absolute;
  width: 100%;
  height: 100%;
  shape-rendering: crispEdges;
}

.grid { stroke: #d3d3d3; }
.day { stroke: #f00; }
.cross { stroke: #008000; }
.level { stroke: #f0f; stroke-width: 2; }
.up { stroke: #d42a0c; }
.down { stroke: #1464bc; }
.upper { stroke: #f00; }
.lower { stroke: #00f; }
.middle { stroke: #ffa550; stroke-width: 3; }
.ma60 { stroke: #008000; }
.ma120 { stroke: #f0f; }
.rsi-line { stroke: #f00; }
.signal { stroke: #005000; stroke-width: 2; }
.note-up { stroke: #d42a0c; }
.note-down { stroke: #1464bc; }
.dash { stroke-dasharray: 4 3; }

.legend {
  display: flex;
  gap: 4px;
  position: absolute;
  left: 8px;
  top: 1px;
  white-space: nowrap;
}

.legend i {
  width: 6px;
  height: 9px;
  margin: 3px 2px 0 0;
  background: #9c9c9c;
}

.legend span + i {
  margin-left: 7px;
}

.black { color: #000; }
.red { color: #f00; }
.green { color: #008000; }
.pink { color: #f0f; }
.orange { color: #ffa550; }
.blue { color: #00f; }
.deep { color: #005000; }
.under { text-decoration: underline; }

.red,
.green,
.pink,
.under {
  font-size: 12px;
}

.note {
  position: absolute;
  transform: translateY(-50%);
  font-size: 12px;
  white-space: nowrap;
}

.note.end {
  transform: translate(-100%, -50%);
}

.rise { color: #d42a0c; }
.fall { color: #1464bc; }

.axis {
  position: relative;
  flex: none;
  width: 56px;
  border-left: 1px solid #808080;
  font-size: 12px;
  line-height: 12px;
}

.axis svg {
  stroke: #000;
}

.scale {
  position: absolute;
  left: 4px;
  transform: translateY(-50%);
}

.pane-tools {
  display: flex;
  gap: 1px;
  position: absolute;
  right: 1px;
  top: 1px;
}

.pane-tools button {
  width: 11px;
  height: 11px;
  background: #dcdcdc;
  font: bold 9px/10px "DejaVu Sans", sans-serif;
}

.pane-tools .off {
  color: #999;
}

.pane-tools i {
  width: 7px;
  height: 7px;
  border: 1px solid #000;
  border-top-width: 2px;
}

.tag {
  position: absolute;
  left: 0;
  right: 0;
  color: #fff;
  text-align: center;
}

.tag.high {
  top: 34px;
  height: 28px;
  padding-top: 1px;
  border: solid #000;
  border-width: 1px 0;
  background: #d42a0c;
}

.tag.now {
  top: 276px;
  height: 39px;
  padding: 1px 0 0 4px;
  background: #2a7fff;
  clip-path: polygon(8px 0, 100% 0, 100% 100%, 8px 100%, 0 50%);
}

.timeline {
  display: flex;
  flex: none;
  height: 20px;
  border-top: 1px solid #000;
  border-bottom: 1px solid #aaa;
  background: #fff;
  font-size: 12px;
}

.dates {
  position: relative;
  flex: 1;
}

.dates span {
  position: absolute;
  line-height: 18px;
  white-space: nowrap;
}

.dates .cursor {
  width: 100px;
  border: 1px solid #000;
  border-top: 0;
  background: #008000;
  color: #fff;
  text-align: center;
}

.dates .mark {
  font-weight: bold;
}

.dates .mark::before {
  content: "";
  position: absolute;
  height: 5px;
  border-left: 1px solid #000;
}

time {
  width: 56px;
  padding-right: 1px;
  line-height: 18px;
  text-align: right;
}

.scroller {
  display: flex;
  align-items: center;
  flex: none;
  height: 18px;
  border-bottom: 2px solid #696969;
}

.scroller button {
  width: 15px;
  height: 16px;
  border: 1px solid #fff;
  border-right-color: #999;
  border-bottom-color: #999;
  background: #f0f0f0;
  color: #000;
  font: 8px/14px "DejaVu Sans", sans-serif;
}

.track {
  flex: 1;
  height: 15px;
}

.thumb {
  width: 51%;
  height: 15px;
  background: #c8c8c8;
}

.speed {
  width: 96px;
  margin: 0 4px;
}

.speed input {
  display: block;
  appearance: none;
  width: 100%;
  height: 10px;
  background: linear-gradient(#888, #888) 0 4px / 100% 1px no-repeat;
}

.speed input::-webkit-slider-thumb {
  appearance: none;
  width: 4px;
  height: 9px;
  border: 1px solid #999;
  background: #fff;
}

.speed svg {
  width: 96px;
  height: 5px;
  stroke: #000;
  shape-rendering: crispEdges;
}

.scroller .media {
  width: 18px;
  color: #555;
}

.media svg {
  width: 12px;
  height: 12px;
}

.scroller .zoom {
  width: 18px;
  border: 0;
  color: #555;
}

.zoom svg {
  width: 16px;
  height: 16px;
}

.tabs {
  display: flex;
  gap: 4px;
  flex: none;
  height: 18px;
  padding-left: 2px;
}

.tabs button {
  height: 18px;
  padding: 0 6px;
  border: 1px solid #fff;
  border-right-color: #777;
  background: #f0f0f0;
  white-space: nowrap;
}

.tabs .active {
  padding: 0 1px;
  border-color: #777;
  background: #fafafa;
}

.tools {
  display: flex;
  flex-direction: column;
  flex: none;
  width: 24px;
  border-left: 2px solid #999;
  background: #e2e8f5;
  overflow: hidden;
}

.tools button {
  height: 20px;
  background: none;
  color: #2a4a7c;
}

.tools .letter {
  height: 19px;
  margin-bottom: 4px;
  border: 1px solid #999;
  background: #f4f6fb;
  color: #000;
}

.tools svg {
  width: 20px;
  height: 20px;
}

.tools .red {
  stroke: #f03030;
}

.tools text {
  fill: #2a4a7c;
  stroke: none;
  font: bold 8px/8px "Liberation Sans", sans-serif;
}

.tools .red-text {
  fill: #f03030;
}
</style>
